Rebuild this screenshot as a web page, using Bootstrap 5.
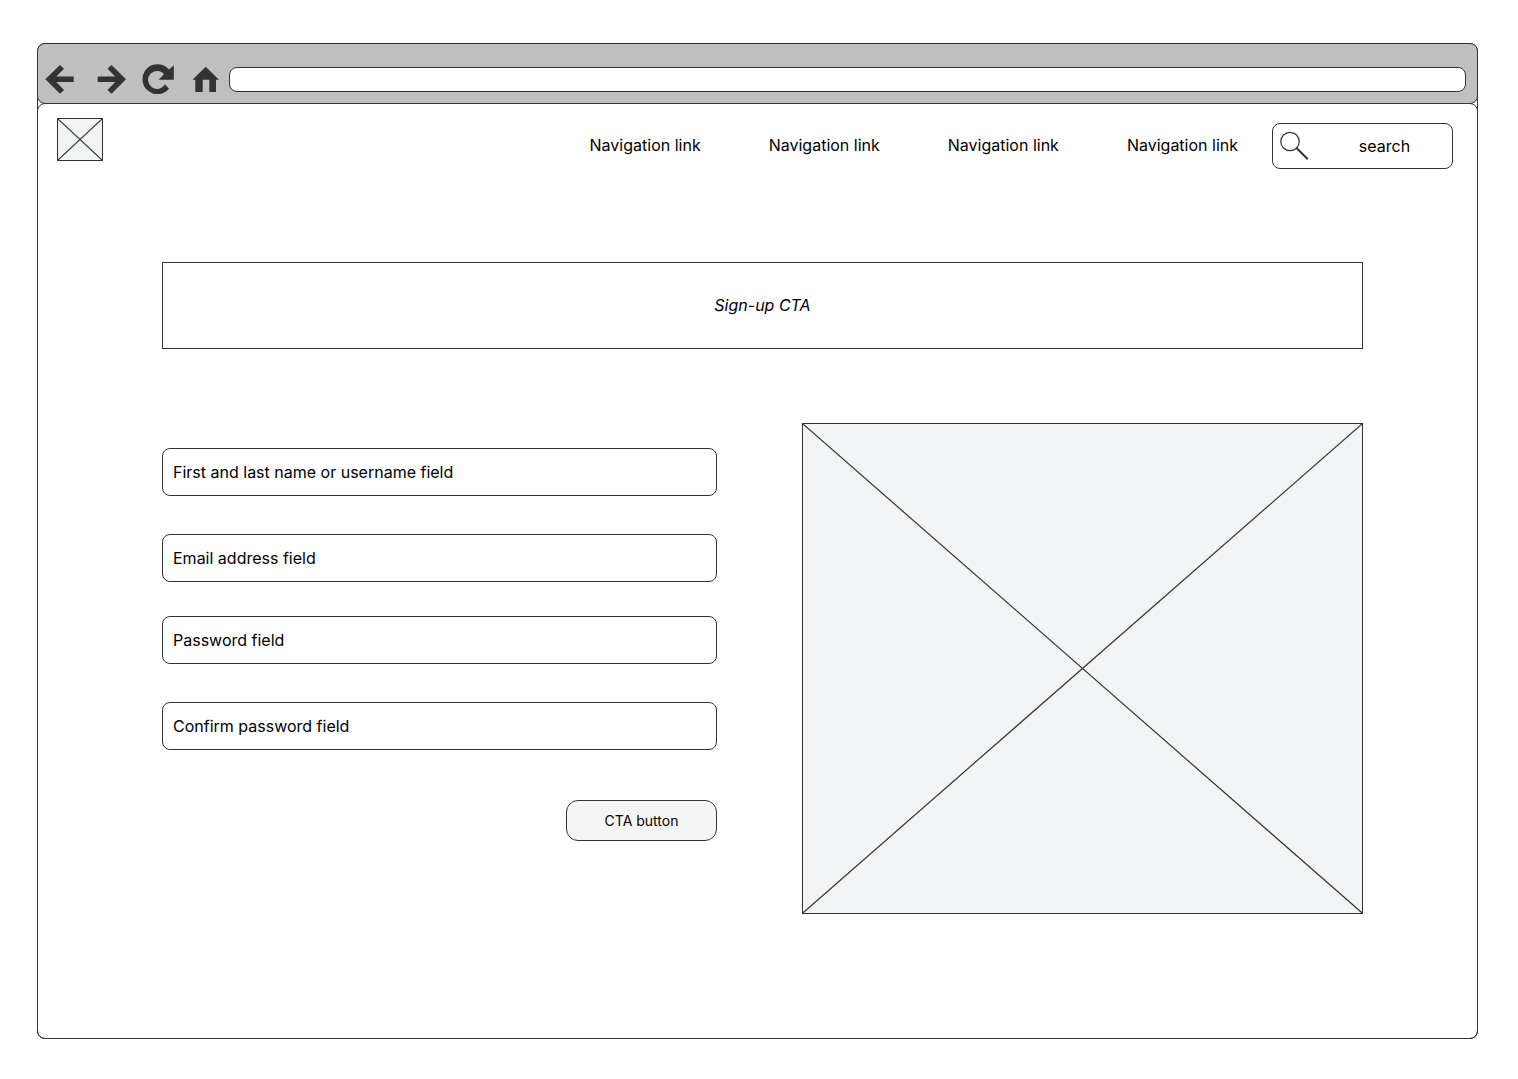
<!DOCTYPE html>
<html lang="en">
<head>
<meta charset="utf-8">
<meta name="viewport" content="width=device-width, initial-scale=1">
<title>Sign-up</title>
<link href="https://cdn.jsdelivr.net/npm/bootstrap@5.3.0/dist/css/bootstrap.min.css" rel="stylesheet">
<style>
  body { font-family: Inter, "Liberation Sans", sans-serif; font-size: 16px; color: #000; background: #fff; }
  .frame { margin: 43px 40px 40px 37px; border: 1px solid #333; border-radius: 8px; }
  .toolbar { margin: -1px -1px 0; padding: 20px 11px 8px 7px; height: 61px; background: #bfbfbf; border: 1px solid #333; border-radius: 8px; }
  .tools { gap: 15px; padding-bottom: 2px; }
  .tool { padding: 0; border: 0; background: none; color: #333; line-height: 0; }
  .tool svg { fill: currentColor; }
  .address { height: 25px; border: 1px solid #333; border-radius: 8px; background: #fff; padding: 0 10px; margin-left: 8px; min-width: 0; }
  .site { margin: -1px; border: 1px solid #333; border-radius: 8px; padding-bottom: 124px; }
  .site-head { padding: 14px 24px 0 19px; }
  .logo-box { width: 46px; height: 43px; }
  .cross { display: block; border: 1px solid #333; background: #f1f3f5; }
  .cross line { stroke: #333; stroke-width: 1.2; vector-effect: non-scaling-stroke; }
  .menu { margin-top: 5px; gap: 34px; }
  .links { gap: 68px; padding-bottom: 2px; }
  .links a { color: #000; text-decoration: none; white-space: nowrap; line-height: 24px; }
  .find { width: 181px; height: 46px; border: 1px solid #333; border-radius: 8px; padding-left: 7px; gap: 8px; }
  .find input { border: 0; background: none; min-width: 0; padding: 0; }
  .find input::-webkit-search-cancel-button { display: none; }
  .content { padding: 93px 114px 0 124px; }
  .banner { height: 87px; border: 1px solid #333; padding-bottom: 2px; }
  .split { margin-top: 74px; gap: 85px; }
  .signup { flex: 556 1 0; padding-top: 25px; gap: 38px; min-width: 0; }
  .picture { flex: 560 1 0; aspect-ratio: 560 / 490; min-width: 0; }
  .signup .form-control { height: 48px; border: 1px solid #333; border-radius: 8px; padding: 0 10px; color: #000; background: #fff; }
  .signup .form-control::placeholder, .find input::placeholder { color: #000; opacity: 1; }
  .passwords { gap: 38px; margin-top: -4px; }
  .cta { width: 151px; height: 41px; margin-top: 12px; border: 1px solid #333; border-radius: 12px; background: #f5f5f5; color: #000; font-size: 14px; padding: 0; }
</style>
</head>
<body>
<div class="frame">
  <div class="toolbar d-flex align-items-center">
    <div class="tools d-flex flex-shrink-0">
      <button class="tool" type="button" aria-label="Back"><svg width="37" height="30" viewBox="0 0 37 30"><path d="M.3 15.3 15 1l4 3.8-7.7 7.8h17.4v5.5H11.3L19 26l-4 3.7z"/></svg></button>
      <button class="tool" type="button" aria-label="Forward"><svg width="30" height="30" viewBox="0 0 30 30"><path d="M29 15.3 14.5 1l-4 3.8 7.7 7.8H.7v5.5h17.5L10.5 26l4 3.7z"/></svg></button>
      <button class="tool" type="button" aria-label="Reload"><svg width="34" height="30" viewBox="0 0 34 30"><path d="M27 5.6A15 15 0 1 0 27 24.8L23 20.2A9 9 0 1 1 22 10.2L16.7 15.8H31.8V1.3z"/></svg></button>
      <button class="tool" type="button" aria-label="Home"><svg width="30" height="30" viewBox="0 0 30 30"><path d="M14.7 2.7 28 15.7h-3V28h-6.7V15.7h-6.6V28H4.3V15.7H1.5z"/></svg></button>
    </div>
    <input class="address flex-grow-1" type="text" aria-label="Address">
  </div>
  <div class="site">
    <header class="site-head d-flex justify-content-between align-items-start">
      <svg class="cross logo-box" viewBox="0 0 44 41" preserveAspectRatio="none" role="img" aria-label="Logo"><line x1="0" y1="0" x2="44" y2="41"/><line x1="44" y1="0" x2="0" y2="41"/></svg>
      <div class="menu d-flex align-items-center">
        <nav class="links d-flex">
          <a href="#">Navigation link</a>
          <a href="#">Navigation link</a>
          <a href="#">Navigation link</a>
          <a href="#">Navigation link</a>
        </nav>
        <label class="find d-flex align-items-center">
          <svg class="flex-shrink-0" width="29" height="30" viewBox="0 0 29 30" fill="none" stroke="#333"><circle cx="10" cy="10.5" r="9.2" stroke-width="1.2"/><path d="m16.5 17 11.3 11.3" stroke-width="2"/></svg>
          <input class="flex-grow-1 text-center" type="search" placeholder="search" aria-label="Search">
        </label>
      </div>
    </header>
    <main class="content">
      <div class="banner d-flex align-items-center justify-content-center fst-italic">Sign-up CTA</div>
      <div class="split d-flex align-items-start">
        <form class="signup d-flex flex-column">
          <input class="form-control" type="text" placeholder="First and last name or username field" aria-label="First and last name or username">
          <input class="form-control" type="email" placeholder="Email address field" aria-label="Email address">
          <div class="passwords d-flex flex-column">
            <input class="form-control" type="password" placeholder="Password field" aria-label="Password">
            <input class="form-control" type="password" placeholder="Confirm password field" aria-label="Confirm password">
          </div>
          <button class="cta btn align-self-end" type="submit">CTA button</button>
        </form>
        <svg class="cross picture" viewBox="0 0 558 488" preserveAspectRatio="none" role="img" aria-label="Picture"><line x1="0" y1="0" x2="558" y2="488"/><line x1="558" y1="0" x2="0" y2="488"/></svg>
      </div>
    </main>
  </div>
</div>
<script src="https://cdn.jsdelivr.net/npm/bootstrap@5.3.0/dist/js/bootstrap.bundle.min.js"></script>
</body>
</html>
